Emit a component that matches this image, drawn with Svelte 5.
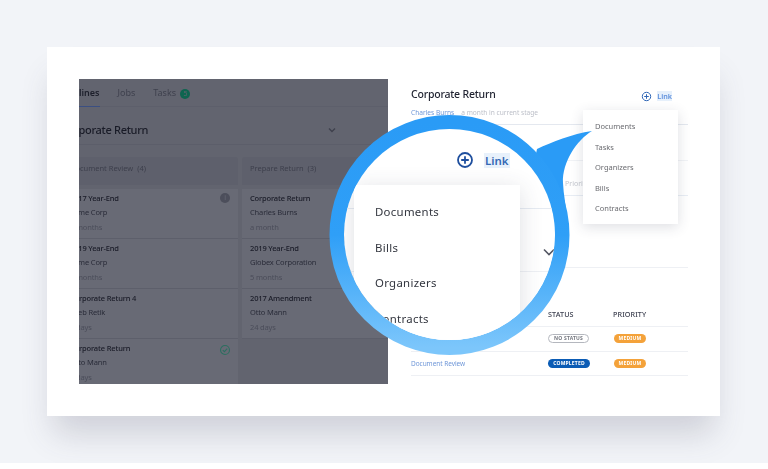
<script lang="ts">
    const columns = [
        {
            title: 'Document Review',
            count: 4,
            width: 176,
            cards: [
                { name: '2017 Year-End', who: 'Acme Corp', age: '6 months', mark: 'info' },
                { name: '2019 Year-End', who: 'Acme Corp', age: '6 months', mark: '' },
                { name: 'Corporate Return 4', who: 'Seeb Retik', age: '9 days', mark: '' },
                { name: 'Corporate Return', who: 'Otto Mann', age: '9 days', mark: 'check' }
            ]
        },
        {
            title: 'Prepare Return',
            count: 3,
            width: 179,
            cards: [
                { name: 'Corporate Return', who: 'Charles Burns', age: 'a month', mark: '' },
                { name: '2019 Year-End', who: 'Globex Corporation', age: '5 months', mark: '' },
                { name: '2017 Amendment', who: 'Otto Mann', age: '24 days', mark: '' }
            ]
        }
    ];
    const menu = ['Documents', 'Tasks', 'Organizers', 'Bills', 'Contracts'];
    const lensMenu = ['Documents', 'Bills', 'Organizers', 'Contracts'];
</script>

<div class="page">
    <div class="card">
        <section class="board">
            <div class="tabs">
                <span class="tab active">Pipelines</span>
                <span class="tab">Jobs</span>
                <span class="tab">Tasks <i class="count">5</i></span>
            </div>
            <div class="board-title">
                <span>Corporate Return</span>
                <svg width="10" height="10" viewBox="0 0 10 10"><path d="M2 3.5 5 6.5 8 3.5" fill="none" stroke="#3f414d" stroke-width="1.4" /></svg>
            </div>
            <div class="columns">
                {#each columns as col}
                    <div class="column" style="width: {col.width}px">
                        <div class="col-head">{col.title} &nbsp;({col.count})</div>
                        {#each col.cards as c}
                            <div class="job">
                                <div class="job-name">{c.name}</div>
                                <div class="job-who">{c.who}</div>
                                <div class="job-age">{c.age}</div>
                                {#if c.mark === 'info'}
                                    <i class="mark-info">i</i>
                                {:else if c.mark === 'check'}
                                    <svg class="mark-check" width="12" height="12" viewBox="0 0 12 12"><circle cx="6" cy="6" r="4.5" fill="none" stroke="#2c6f60" stroke-width="1.1" /><path d="M3.8 6.1 5.4 7.6 8.2 4.6" fill="none" stroke="#2c6f60" stroke-width="1.1" /></svg>
                                {/if}
                            </div>
                        {/each}
                    </div>
                {/each}
            </div>
        </section>

        <section class="detail">
            <header class="detail-head">
                <div>
                    <h2>Corporate Return</h2>
                    <p><a href="#top">Charles Burns</a><span>a month in current stage</span></p>
                </div>
                <div class="link">
                    <svg width="11" height="11" viewBox="0 0 11 11"><circle cx="5.5" cy="5.5" r="4.2" fill="none" stroke="#2f66b5" stroke-width="1" /><path d="M5.5 3.2v4.6M3.2 5.5h4.6" stroke="#2f66b5" stroke-width="1" /></svg>
                    <span>Link</span>
                </div>
            </header>
            <div class="row-a"></div>
            <div class="row-b">Priority</div>
            <div class="row-c"></div>
            <div class="table">
                <span class="th name"></span>
                <span class="th">STATUS</span>
                <span class="th">PRIORITY</span>
                <span class="td name"></span>
                <span class="td"><b class="pill none">NO STATUS</b></span>
                <span class="td"><b class="pill medium">MEDIUM</b></span>
                <span class="td name"><a href="#top">Document Review</a></span>
                <span class="td"><b class="pill done">COMPLETED</b></span>
                <span class="td"><b class="pill medium">MEDIUM</b></span>
            </div>
        </section>

        <ul class="menu">
            {#each menu as m}
                <li>{m}</li>
            {/each}
        </ul>

        <svg class="ring" width="673" height="369" viewBox="0 0 673 369">
            <defs>
                <linearGradient id="ringfill" x1="0" y1="0" x2="0" y2="1">
                    <stop offset="0" stop-color="#2a9bf6" />
                    <stop offset="0.5" stop-color="#2f9ff7" />
                    <stop offset="1" stop-color="#7cc6fb" />
                </linearGradient>
            </defs>
            <path d="M490 102 C505 95 525 87 545 84 C530 93 515 115 516 136 C516.5 148 519 158 519.5 168 L480 150Z" fill="#2a9bf6" />
            <circle cx="402.5" cy="188" r="112.5" fill="none" stroke="url(#ringfill)" stroke-width="15" />
        </svg>

        <div class="lens">
            <div class="lens-line one"></div>
            <div class="lens-line two"></div>
            <div class="lens-link">
                <svg width="18" height="18" viewBox="0 0 18 18"><circle cx="9" cy="9" r="7" fill="none" stroke="#1f4f9e" stroke-width="1.8" /><path d="M9 5.2v7.6M5.2 9h7.6" stroke="#1f4f9e" stroke-width="1.8" /></svg>
                <span>Link</span>
            </div>
            <ul class="lens-menu">
                {#each lensMenu as m}
                    <li>{m}</li>
                {/each}
            </ul>
            <svg class="lens-chevron" width="14" height="10" viewBox="0 0 14 10"><path d="M2 2.5 7 7.5 12 2.5" fill="none" stroke="#555864" stroke-width="1.6" /></svg>
        </div>
    </div>
</div>

<style>
    :global(body) {
        background: #fff;
        font-family: 'Noto Sans', sans-serif;
        overflow: hidden;
    }

    .page {
        background: #f2f4f8;
        box-sizing: border-box;
        height: 463px;
        overflow: hidden;
        padding: 47px 48px 0 47px;
    }

    .card {
        background: #fff;
        box-shadow: 0 24px 30px -6px rgba(70, 70, 95, 0.2);
        box-sizing: border-box;
        display: flex;
        height: 369px;
        padding: 32px;
        position: relative;
    }

    .board {
        background: #62646f;
        color: #191b27;
        filter: blur(0.3px);
        flex: none;
        height: 305px;
        overflow: hidden;
        width: 309px;
    }

    .tabs {
        border-bottom: 1px solid #5d5f6b;
        color: #3f414e;
        display: flex;
        font-size: 9px;
        gap: 18px;
        height: 27px;
        line-height: 27px;
        margin-left: -19px;
    }

    .tab.active {
        border-bottom: 1px solid #3b4f82;
        color: #1d1f2b;
        font-weight: 600;
        margin-bottom: -1px;
    }

    .count {
        background: #0f6550;
        border-radius: 50%;
        color: #62646f;
        display: inline-block;
        font-size: 7px;
        font-style: normal;
        height: 10px;
        line-height: 10px;
        margin-left: 2px;
        text-align: center;
        width: 10px;
    }

    .board-title {
        align-items: center;
        border-bottom: 1px solid #5c5e6a;
        display: flex;
        font-size: 11px;
        font-weight: 500;
        height: 29px;
        justify-content: space-between;
        letter-spacing: -0.3px;
        margin-left: -18px;
        padding-right: 51px;
        padding-top: 8px;
    }

    .columns {
        display: flex;
        gap: 4px;
        margin-left: -17px;
        padding-top: 12px;
    }

    .column {
        flex: none;
    }

    .col-head {
        background: #5e606c;
        border-radius: 3px 3px 0 0;
        color: #3d3f4c;
        font-size: 7.5px;
        height: 28px;
        line-height: 23px;
        margin-bottom: 4px;
        padding-left: 8px;
    }

    .job {
        background: #686a75;
        border-bottom: 1px solid #5d5f6b;
        box-sizing: border-box;
        height: 50px;
        letter-spacing: -0.15px;
        padding: 2px 8px 0;
        position: relative;
    }

    .job-name {
        font-size: 7.5px;
        font-weight: 500;
        line-height: 14px;
    }

    .job-who {
        color: #2a2c39;
        font-size: 7.5px;
        line-height: 15px;
    }

    .job-age {
        color: #4b4d5a;
        font-size: 7.5px;
        line-height: 14px;
    }

    .mark-info {
        background: #4c4e5b;
        border-radius: 50%;
        color: #686a75;
        font-size: 7px;
        font-style: normal;
        height: 10px;
        line-height: 10px;
        position: absolute;
        right: 8px;
        text-align: center;
        top: 4px;
        width: 10px;
    }

    .mark-check {
        position: absolute;
        right: 7px;
        top: 5px;
    }

    .detail {
        color: #1f2230;
        filter: blur(0.2px);
        flex: 1;
        min-width: 0;
        padding-left: 23px;
    }

    .detail-head {
        border-bottom: 1px solid #e4e8ef;
        display: flex;
        height: 45px;
        justify-content: space-between;
    }

    h2 {
        font-size: 10.5px;
        font-weight: 500;
        letter-spacing: -0.2px;
        line-height: 14px;
        margin: 8px 0 0;
    }

    p {
        color: #bcbfc8;
        font-size: 6.6px;
        line-height: 10px;
        margin: 7px 0 0;
    }

    p a {
        margin-right: 7px;
    }

    a {
        color: #6f97d8;
        text-decoration: none;
    }

    .link {
        align-items: center;
        color: #5f90dc;
        display: flex;
        font-size: 7.2px;
        font-weight: 600;
        gap: 5.5px;
        height: 34px;
        margin-right: 16px;
    }

    .link span {
        background: #e6f0fb;
    }

    .row-a {
        border-bottom: 1px solid #f1f3f6;
        height: 35px;
    }

    .row-b {
        border-bottom: 1px solid #e8edf4;
        color: #c4c7ce;
        font-size: 7px;
        height: 34px;
        line-height: 46px;
        padding-left: 154px;
    }

    .row-c {
        border-bottom: 1px solid #eef0f4;
        height: 71px;
    }

    .table {
        display: grid;
        font-size: 7.2px;
        grid-template-columns: 137px 65px 1fr;
        margin-top: 34px;
    }

    .th {
        border-bottom: 1px solid #eef0f4;
        box-sizing: border-box;
        color: #3d4050;
        font-weight: 500;
        height: 25px;
        letter-spacing: 0.1px;
        line-height: 24px;
    }

    .td {
        align-items: center;
        border-bottom: 1px solid #eef0f4;
        box-sizing: border-box;
        display: flex;
        height: 24.5px;
    }

    .td a {
        font-size: 6.5px;
        letter-spacing: -0.05px;
    }

    .pill {
        border-radius: 5px;
        box-sizing: border-box;
        color: #fff;
        font-size: 5px;
        font-weight: 700;
        height: 9px;
        letter-spacing: 0.2px;
        line-height: 9px;
        text-align: center;
    }

    .none {
        border: 1px solid #b4b7be;
        color: #74777f;
        line-height: 7px;
        width: 41px;
    }

    .done {
        background: #0b5cb5;
        width: 42px;
    }

    .medium {
        background: #f4a23a;
        margin-left: 1px;
        width: 32px;
    }

    .menu {
        background: #fff;
        box-shadow: 0 3px 12px rgba(50, 55, 80, 0.16);
        box-sizing: border-box;
        color: #6a6b70;
        filter: blur(0.2px);
        font-size: 7.5px;
        height: 114px;
        left: 536px;
        list-style: none;
        margin: 0;
        padding: 6px 0 0 12px;
        position: absolute;
        top: 63px;
        width: 95px;
    }

    .menu li {
        height: 20.5px;
        line-height: 20px;
    }

    .ring {
        left: 0;
        pointer-events: none;
        position: absolute;
        top: 0;
    }

    .lens {
        background: #fff;
        border-radius: 50%;
        box-sizing: border-box;
        color: #33363f;
        height: 211px;
        left: 297px;
        overflow: hidden;
        padding-top: 21px;
        position: absolute;
        top: 82px;
        width: 211px;
    }

    .lens-line {
        background: #e6ebf2;
        height: 1px;
        left: 0;
        position: absolute;
        right: 0;
    }

    .lens-line.one {
        top: 79px;
    }

    .lens-line.two {
        background: #eef0f4;
        top: 142px;
    }

    .lens-link {
        align-items: center;
        color: #3569b5;
        display: flex;
        font-size: 11.5px;
        font-weight: 600;
        gap: 10px;
        height: 20px;
        margin-left: 112px;
    }

    .lens-link span {
        background: #e8f1fb;
        padding: 0 1px;
    }

    .lens-menu {
        background: #fff;
        box-shadow: 0 4px 22px rgba(50, 55, 80, 0.16);
        filter: blur(0.15px);
        font-size: 11.4px;
        height: 170px;
        letter-spacing: 0.3px;
        list-style: none;
        margin: 15px 0 0 10px;
        padding: 9px 0 0 21px;
        position: relative;
        width: 145px;
    }

    .lens-menu li {
        height: 35.5px;
        line-height: 35px;
    }

    .lens-chevron {
        left: 198px;
        position: absolute;
        top: 118px;
    }
</style>
